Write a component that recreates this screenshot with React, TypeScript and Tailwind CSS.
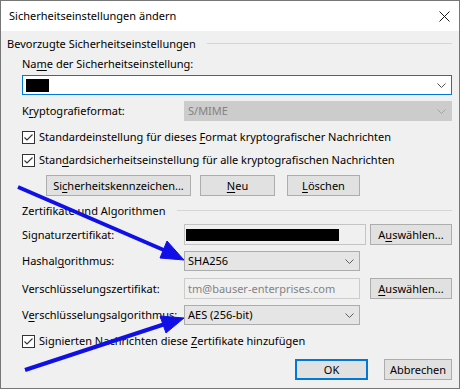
import type { ReactNode } from "react";

function Chevron({ color = "#5f5f5f" }: { color?: string }) {
  return (
    <svg width="9" height="5" viewBox="0 0 9 5" className="shrink-0">
      <path d="M0.5 0.5 L4.5 4.5 L8.5 0.5" fill="none" stroke={color} strokeWidth="1" />
    </svg>
  );
}

function Key({ children }: { children: ReactNode }) {
  return <u className="underline underline-offset-[2px] decoration-1">{children}</u>;
}

function GroupHeader({ children, indent }: { children: ReactNode; indent?: boolean }) {
  return (
    <div className={`flex items-center h-[16px] gap-[11px] ${indent ? "pl-[15px]" : ""}`}>
      <span className="whitespace-nowrap">{children}</span>
      <div className="flex-1 h-px bg-[#d5d5d5] mt-[-1px]" />
    </div>
  );
}

function CheckRow({ children, className = "" }: { children: ReactNode; className?: string }) {
  return (
    <div className={`flex items-center h-[16px] gap-[4px] pl-[15px] ${className}`}>
      <span className="w-[13px] h-[13px] border border-[#333333] bg-white flex items-center justify-center shrink-0">
        <svg width="11" height="11" viewBox="0 0 11 11">
          <path d="M1.5 5.5 L4 8 L9.5 2.5" fill="none" stroke="#333333" strokeWidth="1.1" />
        </svg>
      </span>
      <span className="whitespace-nowrap">{children}</span>
    </div>
  );
}

function Button({ children, className = "" }: { children: ReactNode; className?: string }) {
  return (
    <div
      className={`h-[21px] bg-[#e1e1e1] border border-[#adadad] flex items-center justify-center whitespace-nowrap ${className}`}
    >
      {children}
    </div>
  );
}

function Combo({ children, className = "" }: { children: ReactNode; className?: string }) {
  return (
    <div
      className={`h-[20px] bg-[#e5e5e5] border border-[#acacac] flex items-center justify-between pl-[3px] pr-[5px] ${className}`}
    >
      <span className="whitespace-nowrap">{children}</span>
      <Chevron />
    </div>
  );
}

function Row({ label, children, className = "" }: { label: ReactNode; children: ReactNode; className?: string }) {
  return (
    <div className={`flex items-center pl-[15px] ${className}`}>
      <span className="w-[162px] shrink-0 whitespace-nowrap">{label}</span>
      {children}
    </div>
  );
}

export default function App() {
  return (
    <div className="relative w-[460px] h-[389px] bg-[#f0f0f0] border border-[#767676] flex flex-col font-['Noto_Sans',sans-serif] text-[11px] leading-[16px] text-black overflow-hidden">
      {/* Title bar */}
      <div className="h-[30px] bg-white flex items-center justify-between pl-[8px] pr-[9px] shrink-0">
        <span className="whitespace-nowrap">Sicherheitseinstellungen ändern</span>
        <svg width="11" height="11" viewBox="0 0 11 11">
          <path d="M0.5 0.5 L10.5 10.5 M10.5 0.5 L0.5 10.5" stroke="#1a1a1a" strokeWidth="1" />
        </svg>
      </div>

      <div className="flex flex-col pl-[6px] pr-[7px]">
        <div className="mt-[5px]">
          <GroupHeader>Bevorzugte Sicherheitseinstellungen</GroupHeader>
        </div>

        <div className="mt-[4px] h-[16px] pl-[15px] flex items-center">
          Na<Key>m</Key>e der Sicherheitseinstellung:
        </div>

        <div className="mt-[3px] ml-[15px] h-[20px] bg-white border border-[#0078d7] flex items-center justify-between pl-[3px] pr-[5px]">
          <div className="w-[23px] h-[13px] bg-black" />
          <Chevron color="#4d4d4d" />
        </div>

        <Row
          className="mt-[6px]"
          label={
            <>
              K<Key>r</Key>yptografieformat:
            </>
          }
        >
          <div className="flex-1 h-[20px] bg-[#cccccc] border border-[#cccccc] flex items-center justify-between pl-[3px] pr-[5px] text-[#838383]">
            <span>S/MIME</span>
            <Chevron color="#a3a3a3" />
          </div>
        </Row>

        <CheckRow className="mt-[8px]">
          Standardeinstellung für dieses <Key>F</Key>ormat kryptografischer Nachrichten
        </CheckRow>
        <CheckRow className="mt-[7px]">
          Stan<Key>d</Key>ardsicherheitseinstellung für alle kryptografischen Nachrichten
        </CheckRow>

        <div className="mt-[7px] flex pl-[39px]">
          <Button className="w-[145px]">
            Si<Key>c</Key>herheitskennzeichen...
          </Button>
          <Button className="w-[75px] ml-[9px]">
            <Key>N</Key>eu
          </Button>
          <Button className="w-[73px] ml-[12px]">
            <Key>L</Key>öschen
          </Button>
        </div>

        <div className="mt-[7px]">
          <GroupHeader indent>Zertifikate und Algorithmen</GroupHeader>
        </div>

        <Row className="mt-[5px]" label="Signaturzertifikat:">
          <div className="w-[182px] h-[21px] bg-[#f0f0f0] border border-[#c4c4c4] flex items-center pl-[1px]">
            <div className="w-[153px] h-[12px] bg-black" />
          </div>
          <Button className="w-[82px] ml-[4px]">
            A<Key>u</Key>swählen...
          </Button>
        </Row>

        <Row
          className="mt-[6px]"
          label={
            <>
              Hashal<Key>g</Key>orithmus:
            </>
          }
        >
          <Combo className="w-[176px]">SHA256</Combo>
        </Row>

        <Row className="mt-[7px]" label="Verschlüsselungszertifikat:">
          <div className="w-[176px] h-[21px] bg-[#f0f0f0] border border-[#cccccc] flex items-center pl-[3px] text-[#838383] whitespace-nowrap">
            tm@bauser-enterprises.com
          </div>
          <Button className="w-[82px] ml-[10px]">
            <Key>A</Key>uswählen...
          </Button>
        </Row>

        <Row
          className="mt-[6px]"
          label={
            <>
              V<Key>e</Key>rschlüsselungsalgorithmus:
            </>
          }
        >
          <Combo className="w-[176px]">AES (256-bit)</Combo>
        </Row>

        <CheckRow className="mt-[8px]">
          Signierten Nachrichten diese <Key>Z</Key>ertifikate hinzufügen
        </CheckRow>

        <div className="mt-[10px] flex justify-end">
          <div className="w-[73px] h-[21px] bg-[#e1e1e1] border-2 border-[#0078d7] flex items-center justify-center">
            OK
          </div>
          <Button className="w-[68px] ml-[16px]">Abbrechen</Button>
        </div>
      </div>

      {/* Annotation arrows */}
      <svg className="absolute left-[-1px] top-[-1px] pointer-events-none" width="460" height="389" viewBox="0 0 460 389">
        <g fill="#1010e6" stroke="#1010e6">
          <line x1="18" y1="187" x2="166" y2="251" strokeWidth="4" />
          <polygon points="184,260 160,258 167,241" strokeWidth="1" />
          <line x1="25" y1="370" x2="165" y2="324" strokeWidth="4" />
          <polygon points="184,318 166,333 160,316" strokeWidth="1" />
        </g>
      </svg>
    </div>
  );
}
